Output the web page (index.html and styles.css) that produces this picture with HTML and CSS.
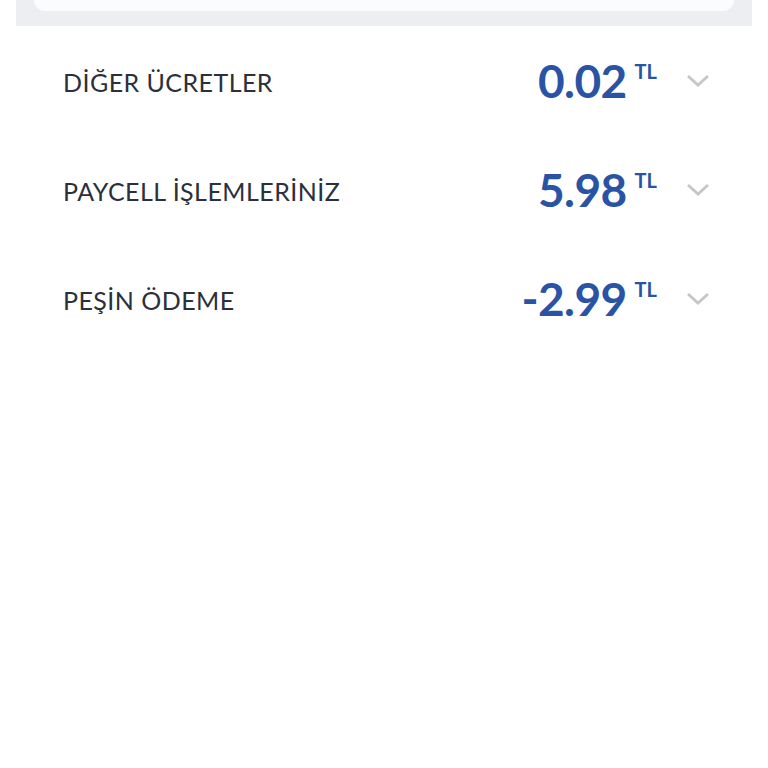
FILE: index.html
```html
<!DOCTYPE html>
<html lang="tr">

<head>
  <meta charset="utf-8">
  <title>fatura detay</title>

  <link rel="stylesheet" href="styles.css">
</head>

<body>
    <div class="topband">
        <div class="topcard"></div>
    </div>

    <div class="list">
        <div class="row">
            <span class="label">DİĞER ÜCRETLER</span>
            <span class="amount"><span class="num">0.02</span><span class="cur">TL</span></span>
            <svg class="chev" width="24" height="14" viewBox="0 0 24 14"><path d="M2 2 L12 11 L22 2" /></svg>
        </div>
        <div class="row">
            <span class="label">PAYCELL İŞLEMLERİNİZ</span>
            <span class="amount"><span class="num">5.98</span><span class="cur">TL</span></span>
            <svg class="chev" width="24" height="14" viewBox="0 0 24 14"><path d="M2 2 L12 11 L22 2" /></svg>
        </div>
        <div class="row">
            <span class="label">PEŞİN ÖDEME</span>
            <span class="amount"><span class="num">-2.99</span><span class="cur">TL</span></span>
            <svg class="chev" width="24" height="14" viewBox="0 0 24 14"><path d="M2 2 L12 11 L22 2" /></svg>
        </div>
    </div>
</body>

</html>
```

FILE: styles.css
```css
body {
	margin: 0;
	background: #ffffff;
	font-family: Lato, "Open Sans", sans-serif;
}

.topband {
	margin: 0 16px;
	height: 26px;
	background: #eceef1;
	padding: 0 18px;
}

.topcard {
	height: 11px;
	background: #fbfcfd;
	border-radius: 0 0 12px 12px;
}

.list {
	padding: 0 58px 0 63px;
}

.row {
	display: flex;
	align-items: center;
	height: 109px;
}

.label {
	flex: 1;
	font-size: 25px;
	color: #2b303b;
	letter-spacing: 0.45px;
	padding-top: 2px;
}

.amount {
	display: flex;
	align-items: flex-start;
	color: #2954a5;
	font-weight: 700;
}

.num {
	font-size: 46px;
	line-height: 1;
	letter-spacing: -0.6px;
	padding-top: 1px;
}

.cur {
	font-size: 20px;
	line-height: 1;
	margin-left: 8px;
	margin-top: 4px;
}

.chev {
	margin-left: 29px;
	fill: none;
	stroke: #c6c6c8;
	stroke-width: 2.8;
}
```
